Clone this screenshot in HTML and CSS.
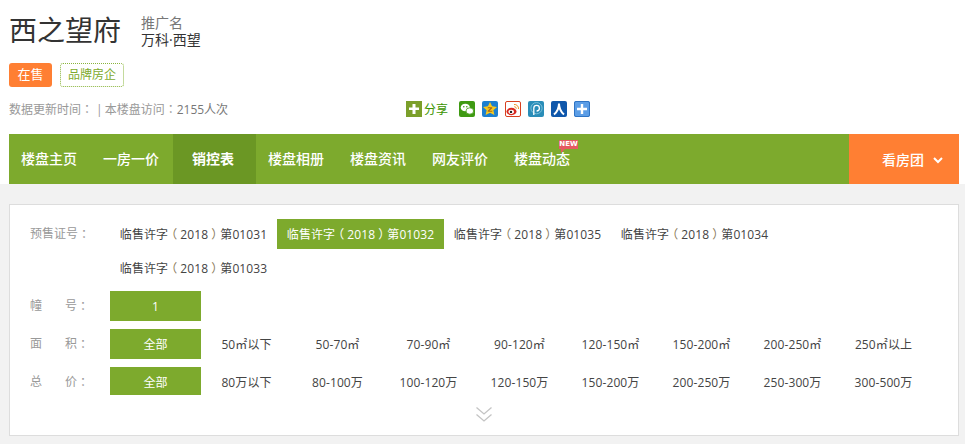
FILE: index.html
```html
<!DOCTYPE html>
<html>
<head>
<meta charset="UTF-8">
<title>西之望府</title>
<link rel="stylesheet" href="styles.css">
</head>
<body>
<div class="top">
  <div class="title-row">
    <h1>西之望府</h1>
    <div class="promo">
      <div class="promo-label">推广名</div>
      <div class="promo-name">万科·西望</div>
    </div>
  </div>
  <div class="tags">
    <span class="tag-sale">在售</span>
    <span class="tag-brand">品牌房企</span>
  </div>
  <div class="info-row">
    <div class="info">数据更新时间<i class="colon">：</i><span class="sep">|</span>本楼盘访问<i class="colon">：</i><span class="visits">2155人次</span></div>
    <div class="share">
      <svg class="icon" viewBox="0 0 16 16"><rect width="16" height="16" fill="#7b9f2a"/><path d="M6.500 3h3v3.500H13v2.500H9.500v4h-3V9H3V6.500h3.500z" fill="#fff"/></svg>
      <span class="share-text">分享</span>
      <div class="share-icons">
        <svg class="icon" viewBox="0 0 16 16"><rect width="16" height="16" rx="2" fill="#3f9a12"/><ellipse cx="6.300" cy="6.500" rx="4.600" ry="3.800" fill="#fff"/><ellipse cx="10.800" cy="10" rx="3.800" ry="3.200" fill="#fff" stroke="#3f9a12" stroke-width=".8"/><circle cx="4.800" cy="5.800" r=".8" fill="#3f9a12"/><circle cx="7.800" cy="5.800" r=".8" fill="#3f9a12"/></svg>
        <svg class="icon" viewBox="0 0 16 16"><rect width="16" height="16" rx="2" fill="#1c7fd0"/><path d="M8 1l2.100 4.300 4.900.6-3.600 3.300 1 4.800L8 11.700 3.600 14l1-4.800L1 5.900l4.900-.6z" fill="#f8c81e"/><path d="M5.800 6.300h4.400v1L7.500 9.700h2.800v1H5.700v-1l2.700-2.400H5.800z" fill="#a5671a"/></svg>
        <svg class="icon" viewBox="0 0 16 16"><rect x=".5" y=".5" width="15" height="15" rx="1.500" fill="#fff" stroke="#d8401f"/><ellipse cx="6.500" cy="10.500" rx="5" ry="3.700" fill="#d8281f"/><ellipse cx="6.200" cy="10.800" rx="2.800" ry="2.100" fill="#fff"/><circle cx="6" cy="10.900" r="1.200" fill="#222"/><path d="M9 3.500a4 4 0 0 1 4.500 4.500M9.300 5.700a2 2 0 0 1 2 2" fill="none" stroke="#f09020"/></svg>
        <svg class="icon" viewBox="0 0 16 16"><rect width="16" height="16" rx="2" fill="#2a8db8"/><circle cx="8.500" cy="7.200" r="5.600" fill="none" stroke="#8fcbe2" stroke-width=".8"/><path d="M5.800 14V7.200a2.800 2.800 0 1 1 2.800 2.800" fill="none" stroke="#fff" stroke-width="1.300"/></svg>
        <svg class="icon" viewBox="0 0 16 16"><rect width="16" height="16" rx="2" fill="#0f57ab"/><path d="M8 2.500c0 4-1.500 8-5 11M8 2.500c0 4 1.500 8 5 11" fill="none" stroke="#fff" stroke-width="2"/></svg>
        <svg class="icon" viewBox="0 0 16 16"><rect width="16" height="16" rx="2" fill="#5b9de6"/><rect x=".5" y=".5" width="15" height="15" rx="1.500" fill="none" stroke="#2f74c4"/><path d="M6.800 3h2.400v3.800H13v2.400H9.200V13H6.800V9.200H3V6.800h3.800z" fill="#fff"/></svg>
      </div>
    </div>
  </div>
</div>

<div class="nav-wrap">
  <div class="nav">
    <a class="nav-item">楼盘主页</a>
    <a class="nav-item">一房一价</a>
    <a class="nav-item active">销控表</a>
    <a class="nav-item">楼盘相册</a>
    <a class="nav-item">楼盘资讯</a>
    <a class="nav-item">网友评价</a>
    <a class="nav-item news">楼盘动态<span class="new-badge">NEW</span></a>
    <a class="nav-tour">看房团<svg class="chevron" viewBox="0 0 10 7"><path d="M1 1l4 4 4-4" fill="none" stroke="#fff" stroke-width="2"/></svg></a>
  </div>
</div>

<div class="main">
  <div class="panel">
    <div class="row cert-row">
      <div class="label">预售证号<i class="colon">：</i></div>
      <div class="certs">
        <a class="cert">临售许字<b class="pl">（</b>2018<b class="pr">）</b>第01031</a>
        <a class="cert on">临售许字<b class="pl">（</b>2018<b class="pr">）</b>第01032</a>
        <a class="cert">临售许字<b class="pl">（</b>2018<b class="pr">）</b>第01035</a>
        <a class="cert">临售许字<b class="pl">（</b>2018<b class="pr">）</b>第01034</a>
        <a class="cert">临售许字<b class="pl">（</b>2018<b class="pr">）</b>第01033</a>
      </div>
    </div>
    <div class="row">
      <div class="label"><span class="l1">幢</span><span class="l2">号</span><i class="colon">：</i></div>
      <div class="opts"><a class="opt on">1</a></div>
    </div>
    <div class="row">
      <div class="label"><span class="l1">面</span><span class="l2">积</span><i class="colon">：</i></div>
      <div class="opts">
        <a class="opt on">全部</a>
        <a class="opt">50㎡以下</a>
        <a class="opt">50-70㎡</a>
        <a class="opt">70-90㎡</a>
        <a class="opt">90-120㎡</a>
        <a class="opt">120-150㎡</a>
        <a class="opt">150-200㎡</a>
        <a class="opt">200-250㎡</a>
        <a class="opt">250㎡以上</a>
      </div>
    </div>
    <div class="row row-last">
      <div class="label"><span class="l1">总</span><span class="l2">价</span><i class="colon">：</i></div>
      <div class="opts">
        <a class="opt on">全部</a>
        <a class="opt">80万以下</a>
        <a class="opt">80-100万</a>
        <a class="opt">100-120万</a>
        <a class="opt">120-150万</a>
        <a class="opt">150-200万</a>
        <a class="opt">200-250万</a>
        <a class="opt">250-300万</a>
        <a class="opt">300-500万</a>
      </div>
    </div>
    <div class="more">
      <svg class="more-icon" viewBox="0 0 16 15"><path d="M.5.500L8 7l7.500-6.500M.5 7.500L8 14l7.500-6.500" fill="none" stroke="#c4c4c4" stroke-width="1.300"/></svg>
    </div>
  </div>
</div>
</body>
</html>
```

FILE: styles.css
```css
* { box-sizing: border-box; }
html, body { margin: 0; padding: 0; }
body { background: #fff; font-family: "Open Sans", "Noto Sans CJK SC", "Liberation Sans", sans-serif; font-size: 12px; color: #333; height: 444px; overflow: hidden; }
a { display: block; color: inherit; }

.colon { font-family: "Noto Sans CJK TC", sans-serif; font-style: normal; }
.pl, .pr { font-weight: 400; font-feature-settings: "halt"; color: #8a7a5a; }
.pl { margin: 0 3px; }
.pr { margin: 0 3px; }

.top { height: 134px; padding: 11px 9px 0; }
.title-row { display: flex; height: 41px; }
h1 { margin: 0; font-size: 28px; font-weight: 400; line-height: 38px; color: #333; }
.promo { margin-left: 20px; padding-top: 3px; font-size: 14px; line-height: 17px; }
.promo-label { color: #777; }
.promo-name { color: #333; }

.tags { display: flex; margin-top: 11px; height: 24px; }
.tag-sale { width: 43px; height: 24px; margin-right: 8px; border-radius: 3px; background: #ff7f33; color: #fff; font-size: 13px; line-height: 23px; text-align: center; }
.tag-brand { width: 64px; height: 24px; border: 1px dotted #8ab53c; border-radius: 3px; color: #7daa2d; line-height: 22px; text-align: center; }

.info-row { display: flex; align-items: center; margin-top: 12px; height: 20px; }
.info { width: 397px; color: #999; line-height: 20px; }
.sep { margin: 0 2px 0 3px; }
.visits { color: #777; }
.share { display: flex; align-items: center; }
.icon { display: block; width: 16px; height: 16px; }
.share-text { margin-left: 2px; width: 35px; color: #3c9400; }
.share-icons { display: flex; gap: 7px; }

.nav-wrap { padding: 0 6px 0 9px; }
.nav { display: flex; height: 50px; background: #7daa2d; }
.nav-item { position: relative; width: 82px; padding-right: 2px; color: #fff; font-size: 14px; font-weight: 500; line-height: 50px; text-align: center; }
.nav-item.active { width: 83px; padding-right: 3px; background: #6b9724; font-weight: 700; }
.new-badge { position: absolute; left: 57px; top: 6px; width: 19px; height: 9px; background: #e55a62; color: #fff; font-family: "DejaVu Sans", sans-serif; font-size: 7px; font-weight: 700; line-height: 9px; text-align: center; }
.new-badge::after { content: ""; position: absolute; left: 2px; top: 9px; border: 2px solid transparent; border-top-color: #e55a62; border-left-color: #e55a62; }
.nav-tour { display: flex; align-items: center; margin-left: auto; width: 110px; padding-left: 33px; background: #ff7f33; color: #fff; font-size: 14px; font-weight: 500; }
.chevron { width: 10px; height: 7px; margin-left: 9px; margin-top: 2px; }

.main { height: 260px; padding: 20px 6px 0 9px; background: #f2f2f2; }
.panel { height: 232px; padding: 14px 0 0 20px; border: 1px solid #ddd; background: #fff; }

.row { display: flex; margin-bottom: 8px; }
.row-last { height: 28px; margin-bottom: 0; overflow: hidden; }
.cert-row { margin-bottom: 4px; }
.label { display: flex; width: 80px; color: #999; line-height: 30px; }
.l1 { width: 35px; }
.l2 { width: 12px; }

.certs { display: flex; flex-wrap: wrap; width: 668px; }
.cert { width: 167px; height: 30px; margin-bottom: 4px; color: #444; letter-spacing: .1px; line-height: 32px; text-align: center; white-space: nowrap; }
.cert.on { background: #7daa2d; color: #fff; }
.cert.on .pl, .cert.on .pr { color: #fff; }

.opts { display: flex; }
.opt { width: 91px; height: 30px; color: #444; letter-spacing: .1px; line-height: 32px; text-align: center; white-space: nowrap; }
.opt.on { background: #7daa2d; color: #fff; line-height: 31px; }

.more { display: flex; justify-content: center; margin-left: -20px; padding-top: 12px; }
.more-icon { width: 16px; height: 15px; }
```
